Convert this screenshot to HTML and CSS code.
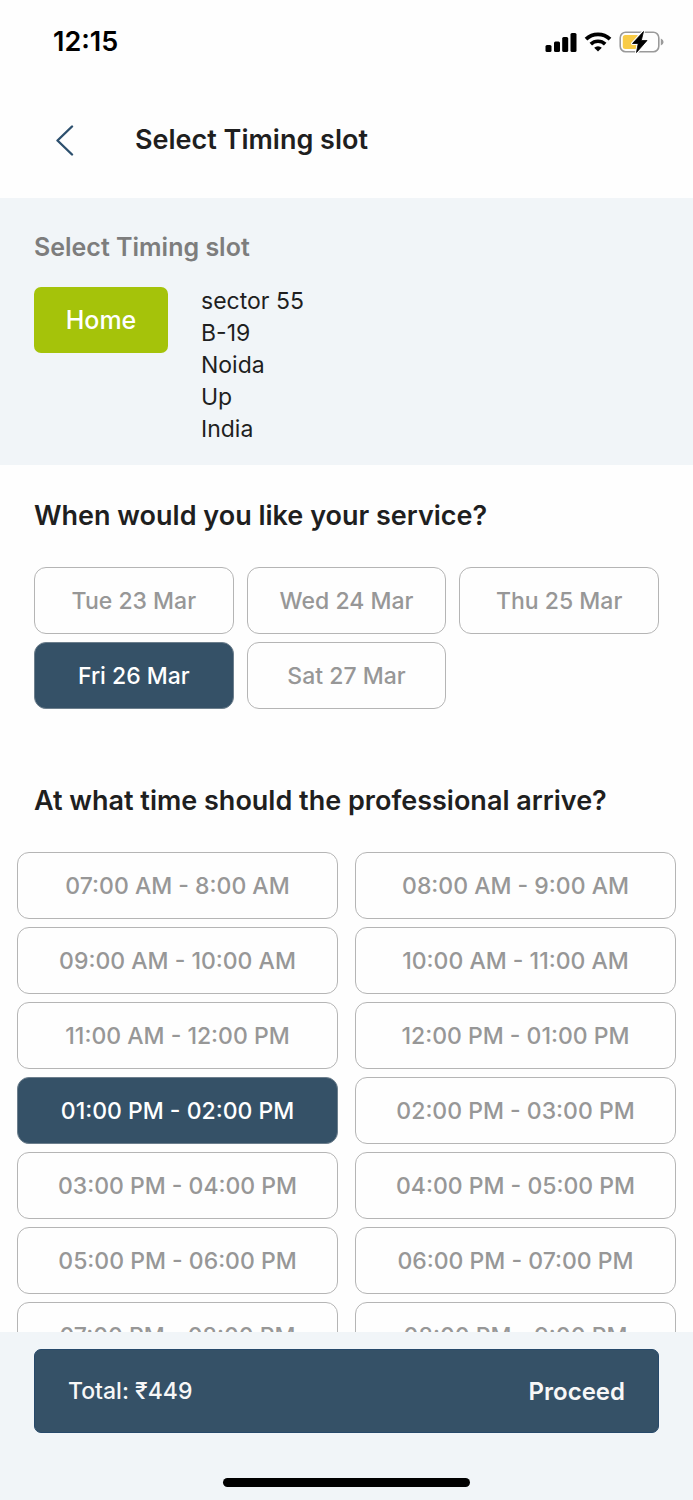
FILE: index.html
```html
<!DOCTYPE html>
<html lang="en">
<head>
<meta charset="utf-8">
<meta name="viewport" content="width=device-width, initial-scale=1">
<title>Select Timing slot</title>
<link rel="stylesheet" href="styles.css">
</head>
<body>
<div class="app">
  <div class="status-bar">
    <span class="clock">12:15</span>
    <div class="status-icons">
      <svg width="32" height="20" viewBox="0 0 32 20" aria-hidden="true">
        <rect x="0.5" y="13" width="6" height="7" rx="1.5"/>
        <rect x="9" y="9.5" width="6" height="10.5" rx="1.5"/>
        <rect x="17.2" y="5" width="6" height="15" rx="1.5"/>
        <rect x="25.5" y="1" width="6" height="19" rx="1.5"/>
      </svg>
      <svg width="28" height="20" viewBox="0 0 28 20" aria-hidden="true">
        <path d="M2 7.2A17.2 17.2 0 0 1 26 7.2" fill="none" stroke="#000" stroke-width="3.8"/>
        <path d="M6.8 12.1A10.4 10.4 0 0 1 21.200 12.100" fill="none" stroke="#000" stroke-width="3.6"/>
        <path d="M10.200 15.700A5.500 5.500 0 0 1 17.800 15.700L14 19.600Z"/>
      </svg>
      <svg width="46" height="24" viewBox="0 0 46 24" aria-hidden="true">
        <rect x="1.2" y="2.2" width="38.6" height="19.6" rx="5.5" fill="none" stroke="#9a9a9a" stroke-width="1.6"/>
        <path d="M41.8 8.5Q44.6 9.5 44.6 12T41.8 15.5Z" fill="#9a9a9a"/>
        <rect x="3.8" y="5" width="16" height="14" rx="2.5" fill="#f8cb46"/>
        <path d="M24.5 1.5L13.5 13.5H19.2L17.5 22.5L28 10.5H22.300Z" stroke="#fefefe" stroke-width="3" stroke-linejoin="round"/>
        <path d="M24.5 1.5L13.5 13.5H19.2L17.5 22.5L28 10.5H22.300Z" stroke="#000" stroke-width="0.8" stroke-linejoin="round"/>
      </svg>
    </div>
  </div>

  <header class="nav-bar">
    <button class="back" type="button" aria-label="Back">
      <svg width="20" height="32" viewBox="0 0 20 32" aria-hidden="true">
        <path d="M17 2.500L2.500 16.500L17 30.500" fill="none" stroke="#2d506e" stroke-width="2.4" stroke-linecap="round" stroke-linejoin="round"/>
      </svg>
    </button>
    <h1 class="title">Select Timing slot</h1>
  </header>

  <section class="address">
    <h2 class="address-heading">Select Timing slot</h2>
    <div class="address-row">
      <button class="address-tag" type="button">Home</button>
      <address class="address-lines">sector 55<br>B-19<br>Noida<br>Up<br>India</address>
    </div>
  </section>

  <main class="scroller">
    <section class="group">
      <h2 class="question">When would you like your service?</h2>
      <div class="slots days">
        <button class="slot" type="button">Tue 23 Mar</button>
        <button class="slot" type="button">Wed 24 Mar</button>
        <button class="slot" type="button">Thu 25 Mar</button>
        <button class="slot selected" type="button" aria-pressed="true">Fri 26 Mar</button>
        <button class="slot" type="button">Sat 27 Mar</button>
      </div>
    </section>
    <section class="group">
      <h2 class="question">At what time should the professional arrive?</h2>
      <div class="slots times">
        <button class="slot" type="button">07:00 AM - 8:00 AM</button>
        <button class="slot" type="button">08:00 AM - 9:00 AM</button>
        <button class="slot" type="button">09:00 AM - 10:00 AM</button>
        <button class="slot" type="button">10:00 AM - 11:00 AM</button>
        <button class="slot" type="button">11:00 AM - 12:00 PM</button>
        <button class="slot" type="button">12:00 PM - 01:00 PM</button>
        <button class="slot selected" type="button" aria-pressed="true">01:00 PM - 02:00 PM</button>
        <button class="slot" type="button">02:00 PM - 03:00 PM</button>
        <button class="slot" type="button">03:00 PM - 04:00 PM</button>
        <button class="slot" type="button">04:00 PM - 05:00 PM</button>
        <button class="slot" type="button">05:00 PM - 06:00 PM</button>
        <button class="slot" type="button">06:00 PM - 07:00 PM</button>
        <button class="slot" type="button">07:00 PM - 08:00 PM</button>
        <button class="slot" type="button">08:00 PM - 9:00 PM</button>
      </div>
    </section>
  </main>

  <footer class="checkout">
    <button class="proceed" type="button">
      <span class="total">Total: ₹449</span>
      <span class="proceed-label">Proceed</span>
    </button>
    <div class="home-indicator"></div>
  </footer>
</div>
</body>
</html>
```
FILE: styles.css
```css
* {
  box-sizing: border-box;
}

body {
  margin: 0;
  background: #fefefe;
  color: #1f1f1f;
  font-family: Inter, "Liberation Sans", sans-serif;
  font-size: 23px;
}

h1,
h2 {
  margin: 0;
  font-weight: 600;
}

button {
  margin: 0;
  padding: 0;
  border: 0;
  background: none;
  color: inherit;
  font: inherit;
  cursor: pointer;
}

svg {
  display: block;
}

.app {
  display: flex;
  flex-direction: column;
  height: 100vh;
}

.status-bar {
  display: flex;
  align-items: center;
  justify-content: space-between;
  height: 83px;
  padding: 0 28px 0 53px;
  color: #000;
}

.clock {
  font-size: 27px;
  font-weight: 600;
}

.status-icons {
  display: flex;
  align-items: center;
  gap: 7px;
}

.nav-bar {
  display: flex;
  align-items: center;
  gap: 52px;
  height: 115px;
  padding: 0 47px 2px;
}

.back {
  display: flex;
  align-items: center;
  justify-content: center;
  width: 36px;
  height: 48px;
}

.title,
.question {
  font-size: 27px;
  line-height: 32px;
}

.address {
  padding: 33px 34px 20px;
  background: #f1f5f8;
}

.address-heading {
  margin-bottom: 24px;
  color: #7d7d7d;
  font-size: 25px;
  line-height: 32px;
}

.address-row {
  display: flex;
  align-items: flex-start;
  gap: 33px;
}

.address-tag {
  width: 134px;
  height: 66px;
  border-radius: 7px;
  background: #a5c30a;
  color: #fff;
  font-size: 25px;
  font-weight: 500;
}

.address-lines {
  margin-top: -2px;
  font-style: normal;
  line-height: 32px;
}

.scroller {
  flex: 1;
  min-height: 0;
  overflow-y: auto;
  scrollbar-width: none;
}

.group {
  padding-top: 35px;
}

.group + .group {
  padding-top: 76px;
}

.question {
  padding: 0 34px;
}

.slots {
  display: grid;
  margin-top: 35px;
  row-gap: 8px;
}

.days {
  grid-template-columns: repeat(3, 1fr);
  column-gap: 13px;
  padding: 0 34px;
}

.times {
  grid-template-columns: repeat(2, 1fr);
  column-gap: 17px;
  padding: 0 17px;
}

.slot {
  height: 67px;
  border: 1px solid #b5b5b5;
  border-radius: 12px;
  color: #979797;
  font-weight: 500;
}

.slot.selected {
  border-color: #6d7f8d;
  background: #355167;
  color: #fff;
}

.checkout {
  display: flex;
  flex-direction: column;
  align-items: center;
  padding: 17px 34px 13px;
  background: #f1f5f8;
}

.proceed {
  display: flex;
  align-items: center;
  justify-content: space-between;
  width: 100%;
  height: 84px;
  padding: 0 33px;
  border: 1px solid #27496a;
  border-radius: 7px;
  background: #355167;
  color: #f7f7f7;
}

.total {
  font-weight: 500;
}

.proceed-label {
  font-size: 24px;
  font-weight: 600;
}

.home-indicator {
  width: 40%;
  max-width: 247px;
  height: 9px;
  margin-top: 45px;
  border-radius: 5px;
  background: #000;
}
```
